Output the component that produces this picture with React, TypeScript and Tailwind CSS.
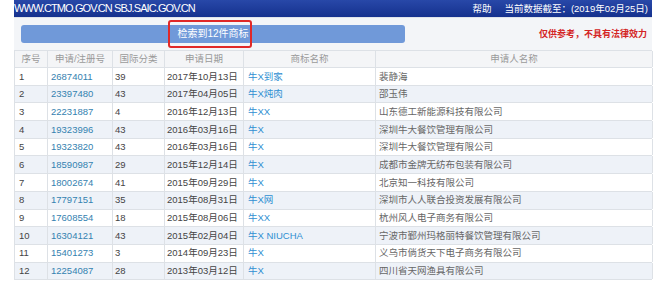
import React from "react";

const rows: [string, string, string, string, string, string][] = [
  ["1", "26874011", "39", "2017年10月13日", "牛X到家", "裴静海"],
  ["2", "23397480", "43", "2017年04月05日", "牛X炖肉", "邵玉伟"],
  ["3", "22231887", "4", "2016年12月13日", "牛XX", "山东德工新能源科技有限公司"],
  ["4", "19323996", "43", "2016年03月16日", "牛X", "深圳牛大餐饮管理有限公司"],
  ["5", "19323820", "43", "2016年03月16日", "牛X", "深圳牛大餐饮管理有限公司"],
  ["6", "18590987", "29", "2015年12月14日", "牛X", "成都市金牌无纺布包装有限公司"],
  ["7", "18002674", "41", "2015年09月29日", "牛X", "北京知一科技有限公司"],
  ["8", "17797151", "35", "2015年08月31日", "牛X网", "深圳市人人联合投资发展有限公司"],
  ["9", "17608554", "18", "2015年08月06日", "牛XX", "杭州风人电子商务有限公司"],
  ["10", "16304121", "43", "2015年02月04日", "牛X NIUCHA", "宁波市鄞州玛格丽特餐饮管理有限公司"],
  ["11", "15401273", "3", "2014年09月23日", "牛X", "义乌市倘货天下电子商务有限公司"],
  ["12", "12254087", "28", "2013年03月12日", "牛X", "四川省天网渔具有限公司"],
];

const font = { fontFamily: '"Liberation Sans", "Noto Sans CJK SC", sans-serif' };

export default function App() {
  const grid = "grid grid-cols-[33px_65px_52px_79px_132px_277px]";
  return (
    <div className="w-[658px] h-[308px] bg-white" style={font}>
      <div className="ml-[14px] w-[638px]">
        {/* top bar */}
        <div className="h-[17px] bg-[linear-gradient(#2848a8,#15318e)] flex items-center text-white">
          <span className="text-[11px] tracking-[-0.9px] leading-none">WWW.CTMO.GOV.CN SBJ.SAIC.GOV.CN</span>
          <span className="ml-auto text-[9.5px] leading-none">帮助</span>
          <span className="ml-[13px] mr-[4px] text-[9.5px] leading-none">当前数据截至：(2019年02月25日)</span>
        </div>
        {/* panel */}
        <div className="h-[33px] bg-[#f3f5f8] border-t border-[#dfe3ea] flex items-center relative">
          <div className="ml-[7px] w-[384px] h-[18px] bg-[#7099d9] rounded-[3px] flex items-center justify-center">
            <span className="text-white text-[10px] leading-none">检索到12件商标</span>
          </div>
          <div className="absolute left-[154px] top-[2px] w-[84px] h-[28px] border-2 border-[#e02828] rounded-[3px]" />
          <span className="ml-auto mr-[5px] text-[#d42424] text-[9px] font-bold leading-none">仅供参考，不具有法律效力</span>
        </div>
        {/* table */}
        <div className="border-l border-[#dde1e6]">
          <div className={`${grid} h-[18px] bg-[#f4f5f7] border-y border-[#dde1e6] text-[#9a9a9a] text-[9.5px]`}>
            {["序号", "申请/注册号", "国际分类", "申请日期", "商标名称", "申请人名称"].map((h) => (
              <div key={h} className="border-r border-[#dde1e6] flex items-center justify-center leading-none">
                {h}
              </div>
            ))}
          </div>
          {rows.map((r, i) => (
            <div
              key={r[0]}
              className={`${grid} h-[17.7px] border-b border-[#dde1e6] text-[9.5px] leading-none ${i % 2 === 1 ? "bg-[#eef2f8]" : "bg-white"}`}
            >
              <div className="border-r border-[#dde1e6] flex items-center pl-[4px] text-[#444]">{r[0]}</div>
              <div className="border-r border-[#dde1e6] flex items-center pl-[3px] text-[#3482b0]">{r[1]}</div>
              <div className="border-r border-[#dde1e6] flex items-center pl-[2px] text-[#444]">{r[2]}</div>
              <div className="border-r border-[#dde1e6] flex items-center pl-[2px] text-[#444]">{r[3]}</div>
              <div className="border-r border-[#dde1e6] flex items-center pl-[4px] text-[#2f8fd2]">{r[4]}</div>
              <div className="border-r border-[#dde1e6] flex items-center pl-[3px] text-[#666]">{r[5]}</div>
            </div>
          ))}
        </div>
      </div>
    </div>
  );
}
